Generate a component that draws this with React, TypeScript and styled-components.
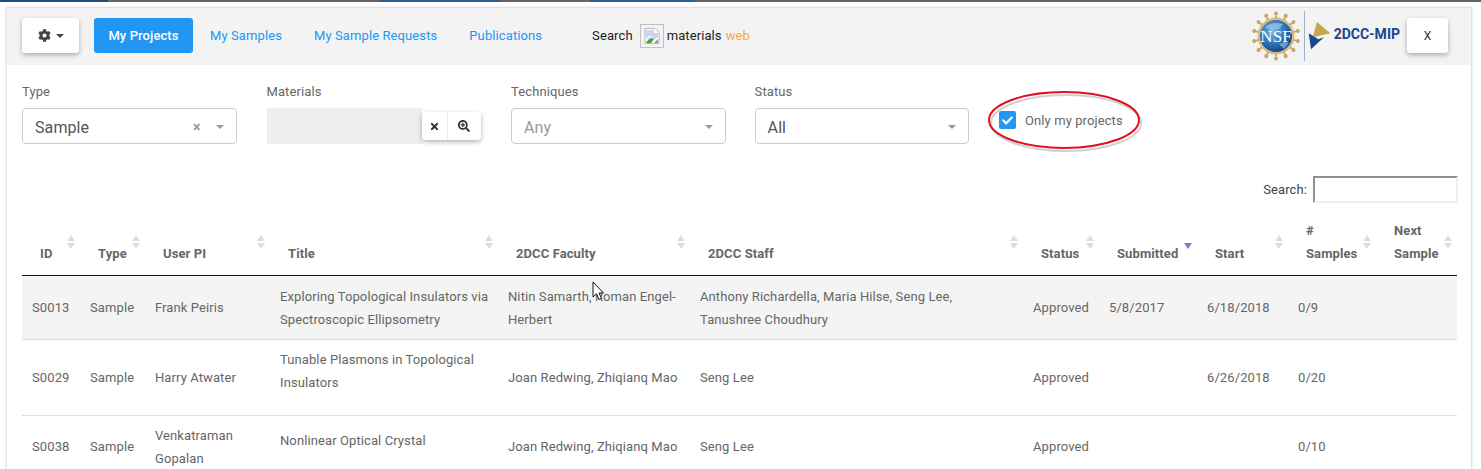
import styled, { createGlobalStyle } from 'styled-components'
import { FaCog, FaTimes, FaSearchPlus, FaCheck } from 'react-icons/fa'

const GlobalStyle = createGlobalStyle`
  html, body {
    margin: 0;
    height: 100%;
    overflow: hidden;
    background: #fff;
    font-family: Roboto, "Liberation Sans", sans-serif;
    letter-spacing: 0.1px;
    color: #666;
  }
`

const TopStrip = styled.div`
  display: flex;
  height: 2px;
`

const StripPart = styled.span<{ $w: number; $color: string }>`
  width: ${({ $w }) => $w}px;
  background: ${({ $color }) => $color};
`

const Backdrop = styled.div`
  height: 467px;
  padding: 5px 9px 0 6px;
  box-sizing: border-box;
  overflow: hidden;
`

const Card = styled.div`
  position: relative;
  height: 480px;
  background: #fff;
  border: 1px solid #e4e4e4;
  border-bottom: 0;
  box-shadow: 0 0 3px rgba(0, 0, 0, 0.12);
`

const TopBar = styled.div`
  display: flex;
  align-items: center;
  box-sizing: border-box;
  height: 57px;
  padding: 0 23px 2px 15px;
  background: #f3f3f3;
`

const RaisedButton = styled.button`
  height: 35px;
  border: 0;
  border-radius: 3px;
  background: #fff;
  box-shadow: 0 2px 5px rgba(0, 0, 0, 0.3);
  display: flex;
  align-items: center;
  justify-content: center;
  color: #444;
  font-family: inherit;
  font-size: 13px;
  padding: 0;
`

const SettingsButton = styled(RaisedButton)`
  width: 57px;
  gap: 5px;
  margin-right: 15px;
`

const Caret = styled.span`
  width: 0;
  height: 0;
  border-left: 4px solid transparent;
  border-right: 4px solid transparent;
  border-top: 4px solid #444;
`

const ActiveTab = styled.a`
  width: 99px;
  height: 35px;
  line-height: 35px;
  text-align: center;
  border-radius: 3px;
  background: #2196f3;
  color: #fff;
  font-size: 13px;
  font-weight: 500;
  margin-right: 17px;
`

const NavLink = styled.a<{ $gap: number }>`
  color: #2196f3;
  font-size: 13px;
  margin-right: ${({ $gap }) => $gap}px;
`

const SearchBrand = styled.div`
  display: flex;
  align-items: center;
  font-size: 13px;
  color: #222;
`

const BrokenImage = styled.span`
  display: flex;
  align-items: center;
  justify-content: center;
  width: 22px;
  height: 22px;
  margin: 0 3px 0 7px;
  border: 1px solid #c0c0c0;
`

const WebWord = styled.span`
  color: #f5a64a;
  margin-left: 4px;
`

const LogoGroup = styled.div`
  display: flex;
  align-items: center;
  margin-left: auto;
  gap: 3px;
`

const LogoDivider = styled.span`
  width: 1px;
  height: 50px;
  background: #9db4c8;
`

const BrandName = styled.span`
  color: #17478c;
  font-size: 14px;
  font-weight: 700;
  letter-spacing: 0;
  margin-right: 4px;
  position: relative;
  top: -2px;
`

const CloseButton = styled(RaisedButton)`
  width: 41px;
  font-size: 12px;
  color: #333;
`

const Filters = styled.div`
  position: relative;
  display: grid;
  grid-template-columns: 244.5px 244.5px 243.6px 233.4px auto;
  align-items: start;
  padding: 18px 0 0 15px;
`

const Field = styled.div`
  display: flex;
  flex-direction: column;
  gap: 8px;
`

const FieldLabel = styled.label`
  font-size: 13px;
  line-height: 17px;
  color: #666;
`

const SelectBox = styled.div<{ $muted?: boolean }>`
  display: flex;
  align-items: center;
  box-sizing: border-box;
  width: 214.5px;
  height: 36px;
  padding: 2px 12px 0 12px;
  border: 1px solid #ccc;
  border-radius: 4px;
  font-size: 16px;
  color: ${({ $muted }) => ($muted ? '#999' : '#555')};
`

const SelectValue = styled.span`
  flex: 1;
`

const ClearMark = styled.span`
  color: #999;
  font-size: 14px;
  font-weight: 700;
  margin-right: 15px;
`

const SelectArrow = styled.span`
  width: 0;
  height: 0;
  border-left: 4.5px solid transparent;
  border-right: 4.5px solid transparent;
  border-top: 4.5px solid #999;
`

const MaterialsRow = styled.div`
  display: flex;
  align-items: center;
  height: 36px;
`

const MaterialsInput = styled.div`
  width: 155px;
  height: 36px;
  background: #eee;
`

const IconGroup = styled.div`
  display: flex;
  height: 28px;
  border-radius: 3px;
  background: #fff;
  box-shadow: 0 2px 5px rgba(0, 0, 0, 0.3);
`

const IconCell = styled.span`
  display: flex;
  align-items: center;
  justify-content: center;
  width: 25px;
  color: #333;
  font-size: 11px;
  & + & {
    width: 33px;
    border-left: 1px solid #eee;
    font-size: 12px;
  }
`

const OnlyMine = styled.div`
  display: flex;
  align-items: center;
  gap: 9px;
  font-size: 13px;
  color: #666;
  margin: 28px 0 0 11px;
`

const CheckBox = styled.span`
  display: flex;
  align-items: center;
  justify-content: center;
  width: 17px;
  height: 18px;
  border-radius: 2px;
  background: #2196f3;
  color: #fff;
  font-size: 11px;
`

const Annotation = styled.svg`
  position: absolute;
  left: 978px;
  top: 26px;
  overflow: visible;
`

const TableSearch = styled.div`
  display: flex;
  justify-content: flex-end;
  align-items: center;
  gap: 6px;
  margin: 32px 13px 0 0;
  font-size: 13px;
  color: #444;
`

const SearchInput = styled.input`
  box-sizing: border-box;
  width: 145px;
  height: 27px;
  border-width: 2px;
  border-style: solid;
  border-color: #8f8f8f #eee #eee #8f8f8f;
  outline: 0;
`

const Table = styled.table`
  table-layout: fixed;
  border-collapse: collapse;
  width: 1435px;
  margin: 12px 0 0 15px;
`

const Col = styled.col<{ $w: number }>`
  width: ${({ $w }) => $w}px;
`

const Th = styled.th`
  position: relative;
  height: 60px;
  padding: 0 10px 10px 18px;
  box-sizing: border-box;
  vertical-align: bottom;
  text-align: left;
  font-size: 13px;
  font-weight: 700;
  line-height: 23px;
  color: #666;
  border-bottom: 1px solid #111;
`

const SortIcon = styled.span`
  position: absolute;
  right: 5px;
  top: 20px;
  display: flex;
  flex-direction: column;
  gap: 2px;
`

const SortUp = styled.i`
  width: 0;
  height: 0;
  border-left: 4.5px solid transparent;
  border-right: 4.5px solid transparent;
  border-bottom: 6px solid #ddd;
`

const SortDown = styled.i<{ $active?: boolean }>`
  width: 0;
  height: 0;
  border-left: 4.5px solid transparent;
  border-right: 4.5px solid transparent;
  border-top: 6px solid ${({ $active }) => ($active ? '#7b7bd6' : '#ddd')};
`

const ActiveSort = styled.span`
  position: absolute;
  right: 5px;
  top: 28px;
  display: flex;
`

const Tr = styled.tr<{ $shaded?: boolean }>`
  background: ${({ $shaded }) => ($shaded ? '#f4f4f4' : '#fff')};
  border-bottom: 1px solid #ddd;
`

const Td = styled.td<{ $spaced?: boolean }>`
  padding: 8px 8px ${({ $spaced }) => ($spaced ? 21 : 8)}px 10px;
  font-size: 13px;
  line-height: 23px;
  color: #666;

  tr:first-child > & {
    padding-top: 9px;
  }
`

const Pointer = styled.svg`
  position: absolute;
  left: 585px;
  top: 273px;
`

const stripParts = [
  { w: 108, color: '#1d4f7e' },
  { w: 272, color: '#666' },
  { w: 120, color: '#2a5f8f' },
  { w: 90, color: '#666' },
  { w: 105, color: '#2a5f8f' },
  { w: 786, color: '#666' },
]

const columns = [
  { label: 'ID', w: 58 },
  { label: 'Type', w: 65 },
  { label: 'User PI', w: 125 },
  { label: 'Title', w: 228 },
  { label: '2DCC Faculty', w: 192 },
  { label: '2DCC Staff', w: 333 },
  { label: 'Status', w: 76 },
  { label: 'Submitted', w: 98 },
  { label: 'Start', w: 91 },
  { label: '# Samples', w: 88 },
  { label: 'Next Sample', w: 81 },
]

const rows = [
  {
    shaded: true,
    spaced: false,
    cells: [
      'S0013',
      'Sample',
      'Frank Peiris',
      'Exploring Topological Insulators via Spectroscopic Ellipsometry',
      'Nitin Samarth, Roman Engel-Herbert',
      'Anthony Richardella, Maria Hilse, Seng Lee, Tanushree Choudhury',
      'Approved',
      '5/8/2017',
      '6/18/2018',
      '0/9',
      '',
    ],
  },
  {
    shaded: false,
    spaced: true,
    cells: [
      'S0029',
      'Sample',
      'Harry Atwater',
      'Tunable Plasmons in Topological Insulators',
      'Joan Redwing, Zhiqianq Mao',
      'Seng Lee',
      'Approved',
      '',
      '6/26/2018',
      '0/20',
      '',
    ],
  },
  {
    shaded: false,
    spaced: true,
    cells: [
      'S0038',
      'Sample',
      'Venkatraman Gopalan',
      'Nonlinear Optical Crystal',
      'Joan Redwing, Zhiqianq Mao',
      'Seng Lee',
      'Approved',
      '',
      '',
      '0/10',
      '',
    ],
  },
]

const NsfLogo = () => {
  const rays = Array.from({ length: 14 }, (_, i) => (i * 360) / 14)
  return (
    <svg width='50' height='50' viewBox='0 0 50 50'>
      <defs>
        <radialGradient id='globe' cx='40%' cy='35%' r='70%'>
          <stop offset='0%' stopColor='#78b6e4' />
          <stop offset='60%' stopColor='#2a6fb6' />
          <stop offset='100%' stopColor='#12417f' />
        </radialGradient>
      </defs>
      {rays.map((a) => (
        <g key={a} transform={`rotate(${a} 25 25)`}>
          <path d='M25 3 L27.6 10 L22.4 10 Z' fill='#c9a55f' />
          <circle cx='25' cy='2.6' r='2' fill='#c9a55f' />
        </g>
      ))}
      <circle cx='25' cy='25' r='18.5' fill='#d8bb82' />
      <circle cx='25' cy='25' r='16' fill='url(#globe)' />
      <path d='M14 16 Q22 10 32 13 L28 18 L19 19 Z' fill='#9cc8e8' opacity='0.7' />
      <path d='M28 33 Q34 30 38 32 L33 38 Z' fill='#9cc8e8' opacity='0.6' />
      <text
        x='25'
        y='31'
        textAnchor='middle'
        fontFamily='"Liberation Serif", serif'
        fontSize='17'
        fill='#fff'
      >
        NSF
      </text>
    </svg>
  )
}

const BrandMark = () => (
  <svg width='23' height='38' viewBox='0 0 23 38'>
    <path d='M9 5 L22.3 16.3 L4.7 20.3 Z' fill='#c9a550' />
    <path d='M.7 16.3 L10.3 22.3 L16 20.3 L3 32.3 Z' fill='#17478c' />
  </svg>
)

const BrokenImageIcon = () => (
  <svg width='16' height='16' viewBox='0 0 16 16'>
    <path d='M1 .5 H11 L15 4.5 V15.5 H1 Z' fill='#fff' stroke='#b8b8b8' />
    <path d='M2 2 H10 V5 H14 V9 L9 12 L2 10 Z' fill='#c3d7f2' />
    <path d='M3 9 Q5 7 8 8 L6 10 Z' fill='#fff' />
    <path d='M2 15 Q5 9 10 11 L7 15 Z' fill='#4c9a3c' />
    <path d='M10 15 L14 11 V15 Z' fill='#8a9a8a' />
  </svg>
)

const App = () => {
  return (
    <>
      <GlobalStyle />
      <TopStrip>
        {stripParts.map((p, i) => (
          <StripPart key={i} $w={p.w} $color={p.color} />
        ))}
      </TopStrip>
      <Backdrop>
        <Card>
          <TopBar>
            <SettingsButton>
              <FaCog />
              <Caret />
            </SettingsButton>
            <ActiveTab>My Projects</ActiveTab>
            <NavLink $gap={32}>My Samples</NavLink>
            <NavLink $gap={32}>My Sample Requests</NavLink>
            <NavLink $gap={50}>Publications</NavLink>
            <SearchBrand>
              Search
              <BrokenImage>
                <BrokenImageIcon />
              </BrokenImage>
              materials
              <WebWord>web</WebWord>
            </SearchBrand>
            <LogoGroup>
              <NsfLogo />
              <LogoDivider />
              <BrandMark />
              <BrandName>2DCC-MIP</BrandName>
              <CloseButton>X</CloseButton>
            </LogoGroup>
          </TopBar>

          <Filters>
            <Field>
              <FieldLabel>Type</FieldLabel>
              <SelectBox>
                <SelectValue>Sample</SelectValue>
                <ClearMark>×</ClearMark>
                <SelectArrow />
              </SelectBox>
            </Field>
            <Field>
              <FieldLabel>Materials</FieldLabel>
              <MaterialsRow>
                <MaterialsInput />
                <IconGroup>
                  <IconCell>
                    <FaTimes />
                  </IconCell>
                  <IconCell>
                    <FaSearchPlus />
                  </IconCell>
                </IconGroup>
              </MaterialsRow>
            </Field>
            <Field>
              <FieldLabel>Techniques</FieldLabel>
              <SelectBox $muted>
                <SelectValue>Any</SelectValue>
                <SelectArrow />
              </SelectBox>
            </Field>
            <Field>
              <FieldLabel>Status</FieldLabel>
              <SelectBox>
                <SelectValue>All</SelectValue>
                <SelectArrow />
              </SelectBox>
            </Field>
            <OnlyMine>
              <CheckBox>
                <FaCheck />
              </CheckBox>
              Only my projects
            </OnlyMine>
            <Annotation width='156' height='60' viewBox='0 0 156 60'>
              <ellipse
                cx='79'
                cy='29'
                rx='75'
                ry='28'
                fill='none'
                stroke='rgba(0,0,0,0.18)'
                strokeWidth='2'
                transform='translate(2 3)'
              />
              <ellipse
                cx='79'
                cy='29'
                rx='75'
                ry='28'
                fill='none'
                stroke='#e0101c'
                strokeWidth='2'
              />
            </Annotation>
          </Filters>

          <TableSearch>
            Search:
            <SearchInput />
          </TableSearch>

          <Table>
            <colgroup>
              {columns.map((c) => (
                <Col key={c.label} $w={c.w} />
              ))}
            </colgroup>
            <thead>
              <tr>
                {columns.map((c) => (
                  <Th key={c.label}>
                    {c.label}
                    {c.label === 'Submitted' ? (
                      <ActiveSort>
                        <SortDown $active />
                      </ActiveSort>
                    ) : (
                      <SortIcon>
                        <SortUp />
                        <SortDown />
                      </SortIcon>
                    )}
                  </Th>
                ))}
              </tr>
            </thead>
            <tbody>
              {rows.map((row) => (
                <Tr key={row.cells[0]} $shaded={row.shaded}>
                  {row.cells.map((text, i) => (
                    <Td key={i} $spaced={row.spaced && i === 3}>
                      {text}
                    </Td>
                  ))}
                </Tr>
              ))}
            </tbody>
          </Table>

          <Pointer width='14' height='22' viewBox='0 0 14 22'>
            <path
              d='M1 1 V16 L4.5 12.8 L7 18.5 L9.5 17.4 L7 12 H11.5 Z'
              fill='#fff'
              stroke='#111'
              strokeWidth='1'
            />
          </Pointer>
        </Card>
      </Backdrop>
    </>
  )
}

export default App
